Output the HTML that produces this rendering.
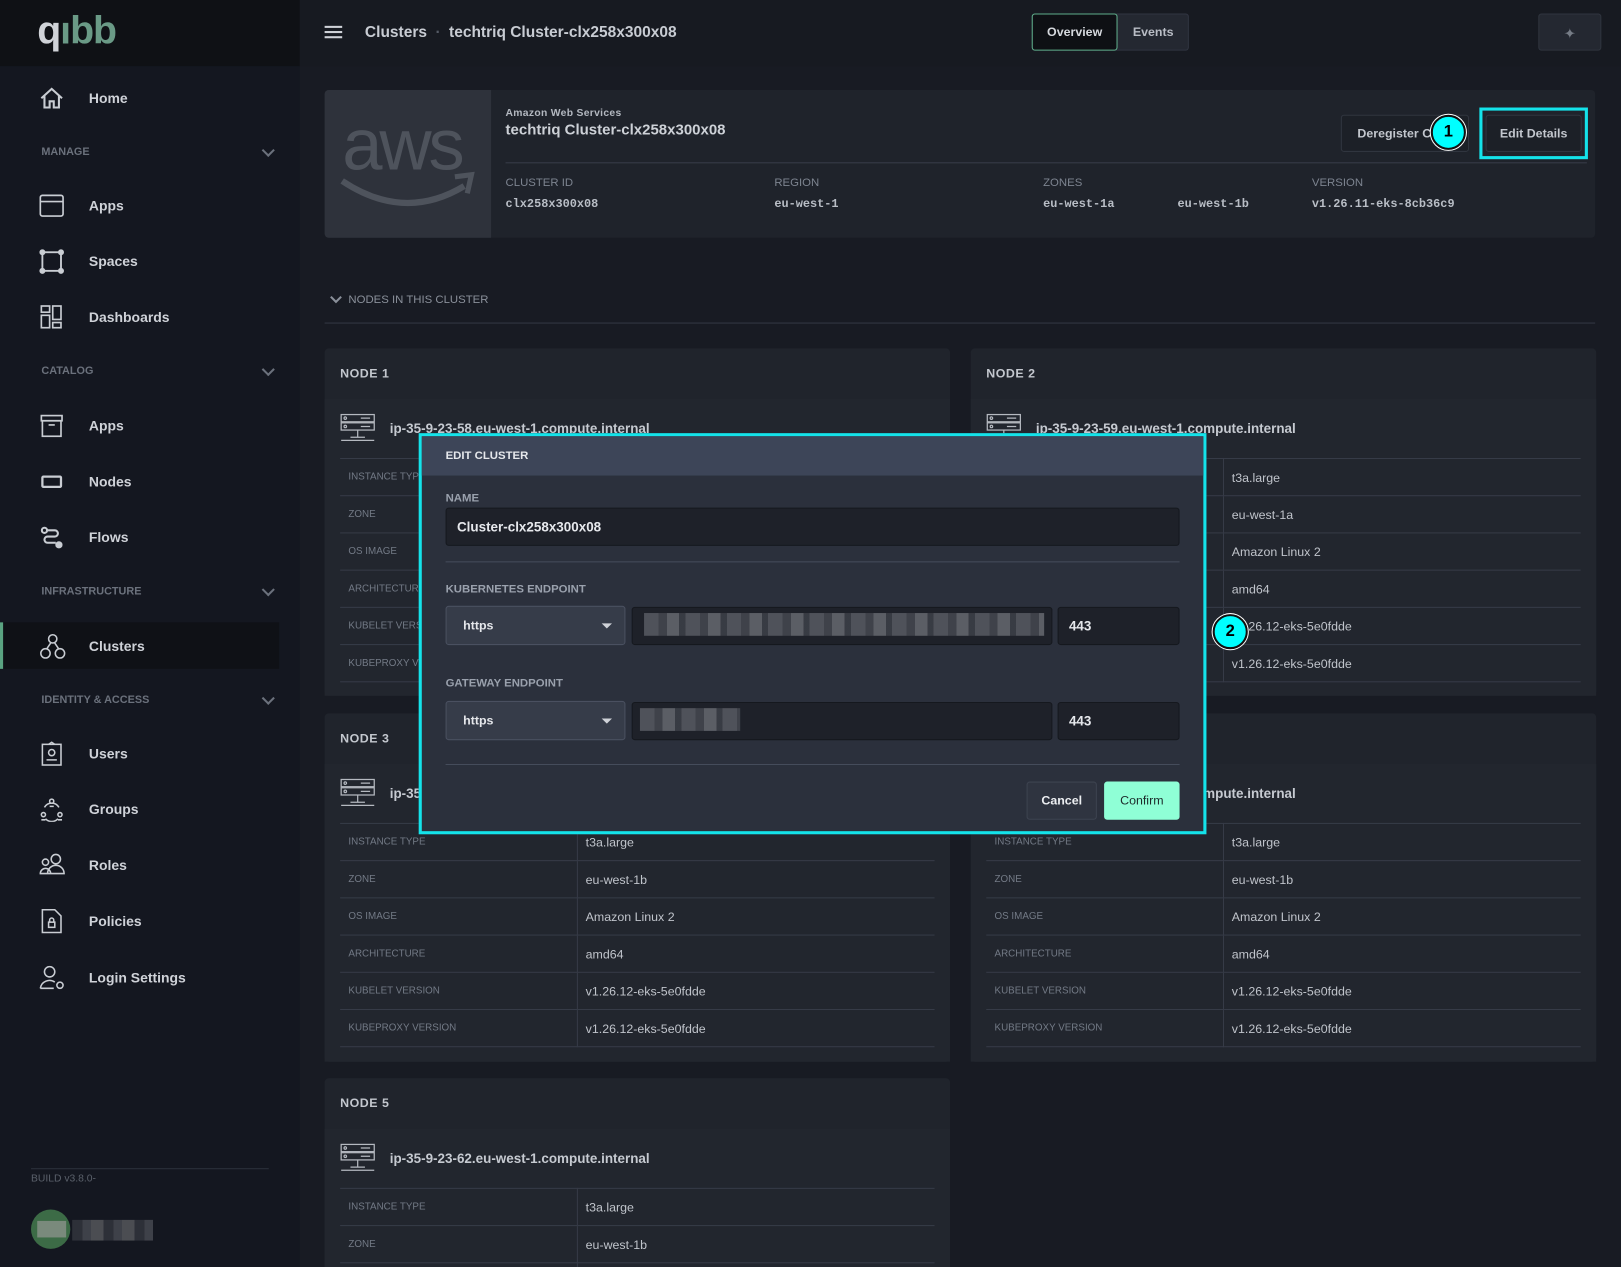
<!DOCTYPE html>
<html><head><meta charset="utf-8"><style>
*{margin:0;padding:0;box-sizing:border-box}
html,body{width:1621px;height:1267px;overflow:hidden;background:#181b23}
#w{position:absolute;left:0;top:0;width:1568px;height:1226px;overflow:hidden;transform:scale(1.0338);transform-origin:0 0;font-family:"Liberation Sans",sans-serif;color:#c9cdd3;background:#181b23}
.a{position:absolute}
.sb{left:0;top:0;width:290px;height:1226px;background:#141720}
.logo{left:0;top:0;width:290px;height:64px;background:#0f1115}
.nav{position:absolute;left:86px;font-size:13.5px;font-weight:bold;color:#cfd2d8;transform:translateY(-50%)}
.sec{position:absolute;left:40px;font-size:10.5px;font-weight:bold;color:#6b717c;transform:translateY(-50%)}
.chev{position:absolute;left:255px;width:9px;height:9px;border-right:2px solid #6b717c;border-bottom:2px solid #6b717c;transform:rotate(45deg)}
.ic{position:absolute;left:38px}
.card{background:#1f232b;border-radius:4px}
.lbl{font-size:11px;color:#7d8490}
.mono{font-family:"Liberation Mono",monospace;font-size:11.5px;font-weight:bold;color:#b9bec6}
.node{position:absolute;background:#20242c;border-radius:4px;width:605px}
.nh{height:49px;padding-left:15px;line-height:49px;font-size:12px;font-weight:bold;color:#c3c7ce;letter-spacing:.5px}
.nb{background:#22262e;position:absolute;left:0;right:0;top:49px;bottom:0}
.srv{position:absolute;left:15px;top:14px}
.host{position:absolute;left:63px;top:21px;font-size:13px;font-weight:bold;color:#c6cad1}
table{position:absolute;left:15px;top:57px;width:575px;border-collapse:collapse}
td{height:36px;border-bottom:1px solid #363b47;font-size:12px;color:#c0c4cb;padding-left:8px}
td:first-child{width:229px;font-size:9.5px;color:#737a86;border-right:1px solid #363b47}
tr:first-child td{border-top:1px solid #363b47}
.modal{left:405px;top:419px;width:762px;height:388px;border:3px solid #14e3ea;background:#2b303c}
.mh{height:38px;background:#3d4558;padding-left:23px;line-height:38px;font-size:11px;font-weight:bold;color:#e6e8ec}
.ml{position:absolute;left:23px;font-size:11px;font-weight:bold;color:#9aa1ad}
.inp{position:absolute;background:#1e2129;border:1px solid #15181e;border-radius:3px}
.sel{position:absolute;background:#363c49;border:1px solid #4a5060;border-radius:3px;font-size:12px;font-weight:bold;color:#e5e7eb;padding-left:16px;line-height:36px}
.sel:after{content:"";position:absolute;right:12px;top:16px;border:5px solid transparent;border-top:5px solid #cfd2d8}
.blur{position:absolute;background:repeating-linear-gradient(90deg,#5b5e66 0 14px,#474a52 14px 22px,#6a6d74 22px 34px,#3f424a 34px 40px)}
.circ{position:absolute;width:34px;height:34px;border-radius:50%;background:#0ff;border:2px solid #111;box-shadow:0 0 0 1px #fff;color:#000;font-weight:bold;font-size:16px;text-align:center;line-height:30px}
</style></head><body><div id="w">
<div class="a sb"></div>
<div class="a logo"></div>
<div class="a" style="left:36px;top:10px;font-size:38px;font-weight:bold;letter-spacing:-1px;line-height:40px"><span style="color:#d0d3d8">q</span><span style="color:#6a9a86">ıbb</span></div>

<!-- sidebar -->
<svg class="ic" style="top:83px" width="24" height="24" viewBox="0 0 24 24" fill="none" stroke="#c9cdd3" stroke-width="2"><path d="M2 12L12 3l10 9M5 10v11h5v-6h4v6h5V10"/></svg>
<div class="nav" style="top:95px">Home</div>
<div class="sec" style="top:147px">MANAGE</div><div class="chev" style="top:141px"></div>
<svg class="ic" style="top:187px" width="24" height="24" viewBox="0 0 24 24" fill="none" stroke="#c9cdd3" stroke-width="1.6"><rect x="1" y="2" width="22" height="20" rx="2"/><path d="M1 8h22"/></svg>
<div class="nav" style="top:199px">Apps</div>
<svg class="ic" style="top:241px" width="24" height="24" viewBox="0 0 24 24" fill="none" stroke="#c9cdd3" stroke-width="1.8"><rect x="3" y="3" width="18" height="18"/><circle cx="3" cy="3" r="2" fill="#c9cdd3"/><circle cx="21" cy="3" r="2" fill="#c9cdd3"/><circle cx="3" cy="21" r="2" fill="#c9cdd3"/><circle cx="21" cy="21" r="2" fill="#c9cdd3"/></svg>
<div class="nav" style="top:253px">Spaces</div>
<svg class="ic" style="top:295px" width="24" height="24" viewBox="0 0 24 24" fill="none" stroke="#c9cdd3" stroke-width="1.6"><rect x="2" y="1" width="8" height="6"/><rect x="2" y="10" width="8" height="12"/><rect x="13" y="1" width="8" height="13"/><rect x="13" y="17" width="8" height="5"/></svg>
<div class="nav" style="top:307px">Dashboards</div>
<div class="sec" style="top:359px">CATALOG</div><div class="chev" style="top:353px"></div>
<svg class="ic" style="top:400px" width="24" height="24" viewBox="0 0 24 24" fill="none" stroke="#c9cdd3" stroke-width="1.6"><rect x="2" y="2" width="20" height="5"/><rect x="3" y="7" width="18" height="15"/><path d="M9 11h6"/></svg>
<div class="nav" style="top:412px">Apps</div>
<svg class="ic" style="top:454px" width="24" height="24" viewBox="0 0 24 24" fill="none" stroke="#c9cdd3" stroke-width="2.2"><rect x="3" y="7" width="18" height="10" rx="1"/></svg>
<div class="nav" style="top:466px">Nodes</div>
<svg class="ic" style="top:508px" width="24" height="24" viewBox="0 0 24 24" fill="none" stroke="#c9cdd3" stroke-width="2"><circle cx="5" cy="5" r="2.5"/><circle cx="19" cy="19" r="2.5" fill="#c9cdd3"/><path d="M7 5h8a3 3 0 010 6H8a3 3 0 000 6h8"/></svg>
<div class="nav" style="top:520px">Flows</div>
<div class="sec" style="top:572px">INFRASTRUCTURE</div><div class="chev" style="top:566px"></div>
<div class="a" style="left:0;top:602px;width:270px;height:45px;background:#0f1116"></div>
<div class="a" style="left:0;top:602px;width:3px;height:45px;background:#5aa381"></div>
<svg class="ic" style="top:612px" width="26" height="26" viewBox="0 0 26 26" fill="none" stroke="#c9cdd3" stroke-width="1.5"><circle cx="13" cy="6" r="4"/><circle cx="6" cy="20" r="4.5"/><circle cx="20" cy="20" r="4.5"/><path d="M11 10l-4 6M15 10l4 6"/></svg>
<div class="nav" style="top:625px">Clusters</div>
<div class="sec" style="top:677px">IDENTITY &amp; ACCESS</div><div class="chev" style="top:671px"></div>
<svg class="ic" style="top:717px" width="24" height="24" viewBox="0 0 24 24" fill="none" stroke="#c9cdd3" stroke-width="1.5"><rect x="3" y="3" width="18" height="20"/><path d="M9 3l3-2 3 2"/><circle cx="12" cy="11" r="3"/><path d="M7 18h10"/></svg>
<div class="nav" style="top:729px">Users</div>
<svg class="ic" style="top:771px" width="24" height="24" viewBox="0 0 24 24" fill="none" stroke="#c9cdd3" stroke-width="1.5"><circle cx="12" cy="4" r="2"/><circle cx="4" cy="17" r="2"/><circle cx="20" cy="17" r="2"/><path d="M5 10a8 8 0 0114 0M6 21a8 8 0 0012 0M10 9h4M2 22h4M18 22h4"/></svg>
<div class="nav" style="top:783px">Groups</div>
<svg class="ic" style="top:825px" width="26" height="24" viewBox="0 0 26 24" fill="none" stroke="#c9cdd3" stroke-width="1.5"><circle cx="6" cy="9" r="3"/><circle cx="16" cy="6" r="4.5"/><path d="M1 20a5 5 0 0110 0zM8 20a8 8 0 0116 0z"/></svg>
<div class="nav" style="top:837px">Roles</div>
<svg class="ic" style="top:879px" width="24" height="24" viewBox="0 0 24 24" fill="none" stroke="#c9cdd3" stroke-width="1.5"><path d="M3 1h12l6 6v16H3z"/><rect x="9" y="13" width="6" height="5"/><path d="M10 13v-2a2 2 0 014 0v2"/></svg>
<div class="nav" style="top:891px">Policies</div>
<svg class="ic" style="top:934px" width="26" height="24" viewBox="0 0 26 24" fill="none" stroke="#c9cdd3" stroke-width="1.5"><circle cx="10" cy="6" r="5"/><path d="M1 22a9 9 0 0114-6M1 22h13"/><circle cx="20" cy="19" r="3"/></svg>
<div class="nav" style="top:946px">Login Settings</div>
<div class="a" style="left:30px;top:1130px;width:230px;height:1px;background:#2c313b"></div>
<div class="a" style="left:30px;top:1135px;font-size:10px;color:#5b616b">BUILD v3.8.0-</div>
<div class="a" style="left:30px;top:1170px;width:38px;height:38px;border-radius:50%;background:#3c6b46"></div>
<div class="a" style="left:36px;top:1181px;width:28px;height:16px;background:#7a8a7c"></div>
<div class="a" style="left:70px;top:1180px;width:78px;height:20px;background:repeating-linear-gradient(90deg,#2d3038 0 10px,#3e4149 10px 18px,#4b4d52 18px 30px)"></div>

<!-- topbar -->
<div class="a" style="left:290px;top:0;width:1278px;height:64px;background:#171a21"></div>
<div class="a" style="left:314px;top:25px;width:17px;height:2px;background:#cfd2d8;box-shadow:0 5px 0 #cfd2d8,0 10px 0 #cfd2d8"></div>
<div class="a" style="left:353px;top:23px;font-size:15px;font-weight:bold;color:#c8ccd3">Clusters <span style="color:#555b66;margin:0 4px">·</span> techtriq Cluster-clx258x300x08</div>
<div class="a" style="left:998px;top:13px;width:152px;height:36px;border:1px solid #303541;border-radius:3px;background:#242831"></div>
<div class="a" style="left:998px;top:13px;width:83px;height:36px;border:1px solid #5fae8b;border-radius:3px;background:#0e1014;font-size:12px;font-weight:bold;color:#d6d9de;text-align:center;line-height:34px">Overview</div>
<div class="a" style="left:1081px;top:13px;width:69px;height:36px;font-size:12px;font-weight:bold;color:#b9bdc5;text-align:center;line-height:36px">Events</div>
<div class="a" style="left:1488px;top:13px;width:61px;height:36px;border:1px solid #2f343e;border-radius:3px;background:#242831;color:#767c86;font-size:14px;text-align:center;line-height:36px">✦</div>

<!-- aws card -->
<div class="a card" style="left:314px;top:87px;width:1229px;height:143px"></div>
<div class="a" style="left:314px;top:87px;width:161px;height:143px;background:#2e323b;border-radius:4px 0 0 4px"></div>
<div class="a" style="left:331px;top:100px;font-size:70px;line-height:80px;color:#4e535c;letter-spacing:-3px">aws</div>
<svg class="a" style="left:328px;top:165px" width="132" height="38" viewBox="0 0 132 38" fill="none"><path d="M3 10q60 40 118 5" stroke="#4e535c" stroke-width="6"/><path d="M112 6l16-2-4 18" stroke="#4e535c" stroke-width="5"/></svg>
<div class="a" style="left:489px;top:104px;font-size:10px;font-weight:bold;color:#b3b8c0;letter-spacing:.3px">Amazon Web Services</div>
<div class="a" style="left:489px;top:118px;font-size:14.5px;font-weight:bold;color:#cdd1d7">techtriq Cluster-clx258x300x08</div>
<div class="a" style="left:489px;top:157px;width:1046px;height:1px;background:#383d49"></div>
<div class="a lbl" style="left:489px;top:171px">CLUSTER ID</div>
<div class="a lbl" style="left:749px;top:171px">REGION</div>
<div class="a lbl" style="left:1009px;top:171px">ZONES</div>
<div class="a lbl" style="left:1269px;top:171px">VERSION</div>
<div class="a mono" style="left:489px;top:191px">clx258x300x08</div>
<div class="a mono" style="left:749px;top:191px">eu-west-1</div>
<div class="a mono" style="left:1009px;top:191px">eu-west-1a</div>
<div class="a mono" style="left:1139px;top:191px">eu-west-1b</div>
<div class="a mono" style="left:1269px;top:191px">v1.26.11-eks-8cb36c9</div>
<div class="a" style="left:1297px;top:111px;width:124px;height:36px;border:1px solid #30353f;border-radius:3px;background:#1c2027;font-size:12px;font-weight:bold;color:#c3c7ce;line-height:34px;padding-left:15px">Deregister Cl</div>
<div class="a" style="left:1437px;top:111px;width:93px;height:36px;border:1px solid #30353f;border-radius:3px;background:#1c2027;font-size:12px;font-weight:bold;color:#c3c7ce;line-height:34px;text-align:center">Edit Details</div>
<div class="a" style="left:1431px;top:104px;width:105px;height:50px;border:3px solid #14e3ea"></div>
<div class="circ" style="left:1384px;top:111px">1</div>

<svg class="a" style="left:319px;top:285px" width="12" height="10"><path d="M1 2l5 5 5-5" stroke="#8a909a" stroke-width="2" fill="none"/></svg>
<div class="a" style="left:337px;top:284px;font-size:11px;color:#8a909a">NODES IN THIS CLUSTER</div>
<div class="a" style="left:314px;top:312px;width:1229px;height:1px;background:#323743"></div>

<!-- nodes -->
<div class="node" style="left:314px;top:337px;height:336px"><div class="nh">NODE 1</div><div class="nb">
<svg class="srv" width="34" height="28" viewBox="0 0 34 28" fill="none" stroke="#b5b9c0" stroke-width="1.2"><rect x="1" y="1" width="32" height="7"/><rect x="1" y="9" width="32" height="7"/><circle cx="5" cy="4.5" r="1.2"/><circle cx="5" cy="12.5" r="1.2"/><path d="M20 4.5h9M20 12.5h9M17 16v7M10 23h14M1 26h32"/></svg>
<div class="host">ip-35-9-23-58.eu-west-1.compute.internal</div>
<table><tr><td>INSTANCE TYPE</td><td>t3a.large</td></tr><tr><td>ZONE</td><td>eu-west-1a</td></tr><tr><td>OS IMAGE</td><td>Amazon Linux 2</td></tr><tr><td>ARCHITECTURE</td><td>amd64</td></tr><tr><td>KUBELET VERSION</td><td>v1.26.12-eks-5e0fdde</td></tr><tr><td>KUBEPROXY VERSION</td><td>v1.26.12-eks-5e0fdde</td></tr></table></div></div>

<div class="node" style="left:939px;top:337px;height:336px"><div class="nh">NODE 2</div><div class="nb">
<svg class="srv" width="34" height="28" viewBox="0 0 34 28" fill="none" stroke="#b5b9c0" stroke-width="1.2"><rect x="1" y="1" width="32" height="7"/><rect x="1" y="9" width="32" height="7"/><circle cx="5" cy="4.5" r="1.2"/><circle cx="5" cy="12.5" r="1.2"/><path d="M20 4.5h9M20 12.5h9M17 16v7M10 23h14M1 26h32"/></svg>
<div class="host">ip-35-9-23-59.eu-west-1.compute.internal</div>
<table><tr><td>INSTANCE TYPE</td><td>t3a.large</td></tr><tr><td>ZONE</td><td>eu-west-1a</td></tr><tr><td>OS IMAGE</td><td>Amazon Linux 2</td></tr><tr><td>ARCHITECTURE</td><td>amd64</td></tr><tr><td>KUBELET VERSION</td><td>v1.26.12-eks-5e0fdde</td></tr><tr><td>KUBEPROXY VERSION</td><td>v1.26.12-eks-5e0fdde</td></tr></table></div></div>

<div class="node" style="left:314px;top:690px;height:337px"><div class="nh">NODE 3</div><div class="nb">
<svg class="srv" width="34" height="28" viewBox="0 0 34 28" fill="none" stroke="#b5b9c0" stroke-width="1.2"><rect x="1" y="1" width="32" height="7"/><rect x="1" y="9" width="32" height="7"/><circle cx="5" cy="4.5" r="1.2"/><circle cx="5" cy="12.5" r="1.2"/><path d="M20 4.5h9M20 12.5h9M17 16v7M10 23h14M1 26h32"/></svg>
<div class="host">ip-35-9-23-60.eu-west-1.compute.internal</div>
<table><tr><td>INSTANCE TYPE</td><td>t3a.large</td></tr><tr><td>ZONE</td><td>eu-west-1b</td></tr><tr><td>OS IMAGE</td><td>Amazon Linux 2</td></tr><tr><td>ARCHITECTURE</td><td>amd64</td></tr><tr><td>KUBELET VERSION</td><td>v1.26.12-eks-5e0fdde</td></tr><tr><td>KUBEPROXY VERSION</td><td>v1.26.12-eks-5e0fdde</td></tr></table></div></div>

<div class="node" style="left:939px;top:690px;height:337px"><div class="nh">NODE 4</div><div class="nb">
<svg class="srv" width="34" height="28" viewBox="0 0 34 28" fill="none" stroke="#b5b9c0" stroke-width="1.2"><rect x="1" y="1" width="32" height="7"/><rect x="1" y="9" width="32" height="7"/><circle cx="5" cy="4.5" r="1.2"/><circle cx="5" cy="12.5" r="1.2"/><path d="M20 4.5h9M20 12.5h9M17 16v7M10 23h14M1 26h32"/></svg>
<div class="host">ip-35-9-23-61.eu-west-1.compute.internal</div>
<table><tr><td>INSTANCE TYPE</td><td>t3a.large</td></tr><tr><td>ZONE</td><td>eu-west-1b</td></tr><tr><td>OS IMAGE</td><td>Amazon Linux 2</td></tr><tr><td>ARCHITECTURE</td><td>amd64</td></tr><tr><td>KUBELET VERSION</td><td>v1.26.12-eks-5e0fdde</td></tr><tr><td>KUBEPROXY VERSION</td><td>v1.26.12-eks-5e0fdde</td></tr></table></div></div>

<div class="node" style="left:314px;top:1043px;height:200px"><div class="nh">NODE 5</div><div class="nb">
<svg class="srv" width="34" height="28" viewBox="0 0 34 28" fill="none" stroke="#b5b9c0" stroke-width="1.2"><rect x="1" y="1" width="32" height="7"/><rect x="1" y="9" width="32" height="7"/><circle cx="5" cy="4.5" r="1.2"/><circle cx="5" cy="12.5" r="1.2"/><path d="M20 4.5h9M20 12.5h9M17 16v7M10 23h14M1 26h32"/></svg>
<div class="host">ip-35-9-23-62.eu-west-1.compute.internal</div>
<table><tr><td>INSTANCE TYPE</td><td>t3a.large</td></tr><tr><td>ZONE</td><td>eu-west-1b</td></tr><tr><td>OS IMAGE</td><td>Amazon Linux 2</td></tr></table></div></div>

<!-- modal -->
<div class="a modal"><div class="mh">EDIT CLUSTER</div>
<div class="ml" style="top:54px">NAME</div>
<div class="inp" style="left:23px;top:69px;width:710px;height:37px;font-size:13px;font-weight:bold;color:#e6e8ec;padding-left:10px;line-height:35px">Cluster-clx258x300x08</div>
<div class="a" style="left:23px;top:121px;width:710px;height:1px;background:#454c5b"></div>
<div class="ml" style="top:142px">KUBERNETES ENDPOINT</div>
<div class="sel" style="left:23px;top:164px;width:174px;height:38px">https</div>
<div class="inp" style="left:203px;top:165px;width:407px;height:37px"></div>
<div class="blur" style="left:215px;top:171px;width:387px;height:22px;opacity:.8"></div>
<div class="inp" style="left:615px;top:165px;width:118px;height:37px;font-size:13px;font-weight:bold;color:#e6e8ec;padding-left:10px;line-height:35px">443</div>
<div class="ml" style="top:233px">GATEWAY ENDPOINT</div>
<div class="sel" style="left:23px;top:256px;width:174px;height:38px">https</div>
<div class="inp" style="left:203px;top:257px;width:407px;height:37px"></div>
<div class="blur" style="left:211px;top:263px;width:97px;height:22px;opacity:.8"></div>
<div class="inp" style="left:615px;top:257px;width:118px;height:37px;font-size:13px;font-weight:bold;color:#e6e8ec;padding-left:10px;line-height:35px">443</div>
<div class="a" style="left:23px;top:317px;width:710px;height:1px;background:#454c5b"></div>
<div class="a" style="left:585px;top:334px;width:68px;height:37px;border:1px solid #3d4350;border-radius:3px;background:#2f3440;font-size:12px;font-weight:bold;color:#eceef1;text-align:center;line-height:35px">Cancel</div>
<div class="a" style="left:660px;top:334px;width:73px;height:37px;border-radius:3px;background:#8fffd6;font-size:12px;color:#1d2a2a;text-align:center;line-height:37px">Confirm</div>
</div>
<div class="circ" style="left:1173px;top:594px">2</div>
</div></body></html>
